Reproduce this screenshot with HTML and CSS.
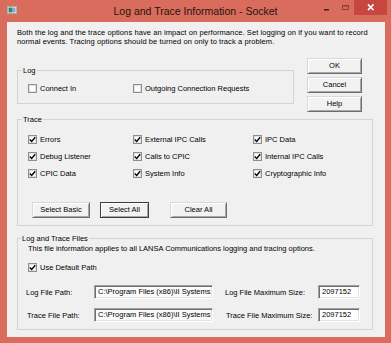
FILE: index.html
```html
<!DOCTYPE html>
<html>
<head>
<meta charset="utf-8">
<link rel="stylesheet" href="styles.css">
</head>
<body>
<div class="window">
  <div class="titlebar">
    <div class="tb-left">
      <svg class="app-icon" width="10" height="8" viewBox="0 0 10 8">
        <rect x="0.5" y="0.5" width="9" height="7" fill="#f4f4f4" stroke="#a9b0b3"/>
        <rect x="1.5" y="1.5" width="3.5" height="5" fill="#2f8c6c"/>
        <rect x="5" y="1.5" width="3.5" height="5" fill="#8fa7b8"/>
      </svg>
    </div>
    <div class="title">Log and Trace Information - Socket</div>
    <div class="controls">
      <span class="ctl ctl-min"><svg width="17" height="15" viewBox="0 0 17 15"><rect x="4" y="9" width="5" height="1.5" fill="#3a2420"/></svg></span>
      <span class="ctl ctl-max"><svg width="17" height="15" viewBox="0 0 17 15"><rect x="5.5" y="5.5" width="6" height="4" fill="none" stroke="#8e4036" stroke-width="1"/><rect x="5" y="5" width="7" height="1.5" fill="#8e4036"/></svg></span>
      <span class="ctl ctl-close"><svg width="33" height="15" viewBox="0 0 33 15"><path d="M14.5 5 L19 9.5 M19 5 L14.5 9.5" stroke="#fff" stroke-width="1.6" stroke-linecap="square"/></svg></span>
    </div>
  </div>

  <div class="client">
    <p class="intro">Both the log and the trace options have an impact on performance. Set logging on if you want to record<br>normal events. Tracing options should be turned on only to track a problem.</p>

    <div class="top-row">
      <fieldset class="group log-group">
        <legend>Log</legend>
        <div class="group-body log-body">
          <div class="check-grid">
            <label class="check"><span class="box"></span>Connect In</label>
            <label class="check"><span class="box"></span>Outgoing Connection Requests</label>
          </div>
        </div>
      </fieldset>
      <div class="side-buttons">
        <button class="btn">OK</button>
        <button class="btn">Cancel</button>
        <button class="btn">Help</button>
      </div>
    </div>

    <fieldset class="group trace-group">
      <legend>Trace</legend>
      <div class="group-body trace-body">
        <div class="check-grid trace-grid">
          <label class="check"><span class="box checked"><svg width="7" height="7" viewBox="0 0 7 7"><path d="M0.8 3.4 L2.7 5.4 L6.2 1.2" fill="none" stroke="#000" stroke-width="1.4"/></svg></span>Errors</label>
          <label class="check"><span class="box checked"><svg width="7" height="7" viewBox="0 0 7 7"><path d="M0.8 3.4 L2.7 5.4 L6.2 1.2" fill="none" stroke="#000" stroke-width="1.4"/></svg></span>External IPC Calls</label>
          <label class="check"><span class="box checked"><svg width="7" height="7" viewBox="0 0 7 7"><path d="M0.8 3.4 L2.7 5.4 L6.2 1.2" fill="none" stroke="#000" stroke-width="1.4"/></svg></span>IPC Data</label>
          <label class="check"><span class="box checked"><svg width="7" height="7" viewBox="0 0 7 7"><path d="M0.8 3.4 L2.7 5.4 L6.2 1.2" fill="none" stroke="#000" stroke-width="1.4"/></svg></span>Debug Listener</label>
          <label class="check"><span class="box checked"><svg width="7" height="7" viewBox="0 0 7 7"><path d="M0.8 3.4 L2.7 5.4 L6.2 1.2" fill="none" stroke="#000" stroke-width="1.4"/></svg></span>Calls to CPIC</label>
          <label class="check"><span class="box checked"><svg width="7" height="7" viewBox="0 0 7 7"><path d="M0.8 3.4 L2.7 5.4 L6.2 1.2" fill="none" stroke="#000" stroke-width="1.4"/></svg></span>Internal IPC Calls</label>
          <label class="check"><span class="box checked"><svg width="7" height="7" viewBox="0 0 7 7"><path d="M0.8 3.4 L2.7 5.4 L6.2 1.2" fill="none" stroke="#000" stroke-width="1.4"/></svg></span>CPIC Data</label>
          <label class="check"><span class="box checked"><svg width="7" height="7" viewBox="0 0 7 7"><path d="M0.8 3.4 L2.7 5.4 L6.2 1.2" fill="none" stroke="#000" stroke-width="1.4"/></svg></span>System Info</label>
          <label class="check"><span class="box checked"><svg width="7" height="7" viewBox="0 0 7 7"><path d="M0.8 3.4 L2.7 5.4 L6.2 1.2" fill="none" stroke="#000" stroke-width="1.4"/></svg></span>Cryptographic Info</label>
        </div>
        <div class="trace-buttons">
          <button class="btn btn-basic">Select Basic</button>
          <button class="btn btn-all btn-default">Select All</button>
          <button class="btn btn-clear">Clear All</button>
        </div>
      </div>
    </fieldset>

    <fieldset class="group files-group">
      <legend>Log and Trace Files</legend>
      <div class="group-body files-body">
        <div class="files-note">This file information applies to all LANSA Communications logging and tracing options.</div>
        <label class="check default-path"><span class="box checked"><svg width="7" height="7" viewBox="0 0 7 7"><path d="M0.8 3.4 L2.7 5.4 L6.2 1.2" fill="none" stroke="#000" stroke-width="1.4"/></svg></span>Use Default Path</label>
        <div class="field-grid">
          <span class="field-label">Log File Path:</span>
          <div class="field path-field">C:\Program Files (x86)\II Systems</div>
          <span class="field-label size-label">Log File Maximum Size:</span>
          <div class="field size-field">2097152</div>
          <span class="field-label trace-label">Trace File Path:</span>
          <div class="field path-field">C:\Program Files (x86)\II Systems</div>
          <span class="field-label size-label trace-label">Trace File Maximum Size:</span>
          <div class="field size-field">2097152</div>
        </div>
      </div>
    </fieldset>
  </div>
</div>
</body>
</html>
```

FILE: styles.css
```css
* {
  box-sizing: border-box;
}

html,
body {
  margin: 0;
  padding: 0;
}

body {
  width: 391px;
  height: 343px;
  overflow: hidden;
  font-family: "Liberation Sans", Arial, sans-serif;
  font-size: 7.5px;
  color: #000;
  background: #d96c5c;
}

.window {
  width: 391px;
  height: 343px;
  background: #d96c5c;
  display: flex;
  flex-direction: column;
}

/* ---------- title bar ---------- */
.titlebar {
  height: 22px;
  display: grid;
  grid-template-columns: 1fr auto 1fr;
  align-items: start;
}

.tb-left {
  padding: 6px 0 0 7px;
}

.app-icon {
  display: block;
}

.title {
  font-size: 10.5px;
  line-height: 22px;
  color: #1f1412;
  white-space: nowrap;
}

.controls {
  justify-self: end;
  display: flex;
  margin-right: 4px;
}

.ctl {
  display: block;
  height: 15px;
}

.ctl svg {
  display: block;
}

.ctl-min,
.ctl-max {
  width: 17px;
}

.ctl-close {
  width: 33px;
  background: #c7463f;
}

/* ---------- client area ---------- */
.client {
  margin: 0 6px 0 7px;
  height: 315px;
  background: #f0f0f0;
  padding: 6px 0 0 10px;
}

.intro {
  margin: 0;
  line-height: 9px;
  letter-spacing: 0.09px;
  white-space: nowrap;
}

.top-row {
  display: flex;
  align-items: flex-start;
  margin-top: 12px;
}

/* ---------- group boxes ---------- */
.group {
  margin: 0;
  padding: 0;
  border: 1px solid #d3d3d3;
  min-width: 0;
}

.group legend {
  padding: 0 1px;
  margin-left: 4px;
  line-height: 9px;
}

.log-group {
  width: 277px;
  margin-top: 8px;
}

.log-body {
  padding: 8px 0 9px 10px;
}

.side-buttons {
  display: flex;
  flex-direction: column;
  gap: 3px;
  margin-left: 13px;
  width: 55px;
}

.trace-group {
  width: 356px;
  margin-top: 3px;
}

.trace-body {
  padding: 7px 0 7px 10px;
}

.files-group {
  width: 356px;
  margin-top: 8px;
}

.files-group legend {
  margin-left: 3px;
}

.files-body {
  padding: 0 0 7px 8px;
}

/* ---------- checkboxes ---------- */
.check-grid {
  display: grid;
  grid-template-columns: 105px 120px auto;
  grid-auto-rows: 11px;
}

.trace-grid {
  grid-auto-rows: 17px;
}

.check {
  display: flex;
  align-items: center;
  white-space: nowrap;
  line-height: 11px;
}

.box {
  width: 9px;
  height: 9px;
  border: 1px solid #8e8e8e;
  background: #fdfdfd;
  box-shadow: inset 0 0 0 1px #e2e2e2;
  margin-right: 3px;
  display: flex;
  align-items: center;
  justify-content: center;
  flex: none;
}

.box svg {
  display: block;
}

/* ---------- buttons ---------- */
.btn {
  height: 16px;
  margin: 0;
  padding: 0;
  font-family: inherit;
  font-size: 7.5px;
  color: #000;
  background: #f2f2f2;
  border: 1px solid;
  border-color: #d8d8d8 #6d6d6d #6d6d6d #d8d8d8;
  box-shadow: inset 1px 1px 0 #fff, inset -1px -1px 0 #a8a8a8;
  line-height: 14px;
}

.btn-default {
  border-color: #3c3c3c;
}

.trace-buttons {
  display: flex;
  margin: 20px 0 0 4px;
}

.btn-basic {
  width: 58px;
}

.btn-all {
  width: 49px;
  margin-left: 10px;
}

.btn-clear {
  width: 57px;
  margin-left: 21px;
}

/* ---------- files ---------- */
.files-note {
  line-height: 11px;
  margin-left: 2px;
  white-space: nowrap;
}

.default-path {
  margin: 8px 0 0 2px;
}

.field-grid {
  display: grid;
  grid-template-columns: 68px 119px 105px 42px;
  grid-auto-rows: 14px;
  row-gap: 9px;
  margin-top: 12px;
  align-items: center;
}

.field-label {
  white-space: nowrap;
}

.trace-label {
  padding-left: 1px;
}

.size-label {
  padding-left: 12px;
}

.trace-label.size-label {
  padding-left: 13px;
}

.field {
  height: 14px;
  border: 1px solid;
  border-color: #a0a0a0 #fff #fff #a0a0a0;
  box-shadow: inset 1px 1px 0 #6f6f6f, inset -1px -1px 0 #e3e3e3;
  background: #fafafa;
  padding-left: 3px;
  line-height: 12px;
  white-space: nowrap;
  overflow: hidden;
}

.size-field {
  background: #fff;
}
```
